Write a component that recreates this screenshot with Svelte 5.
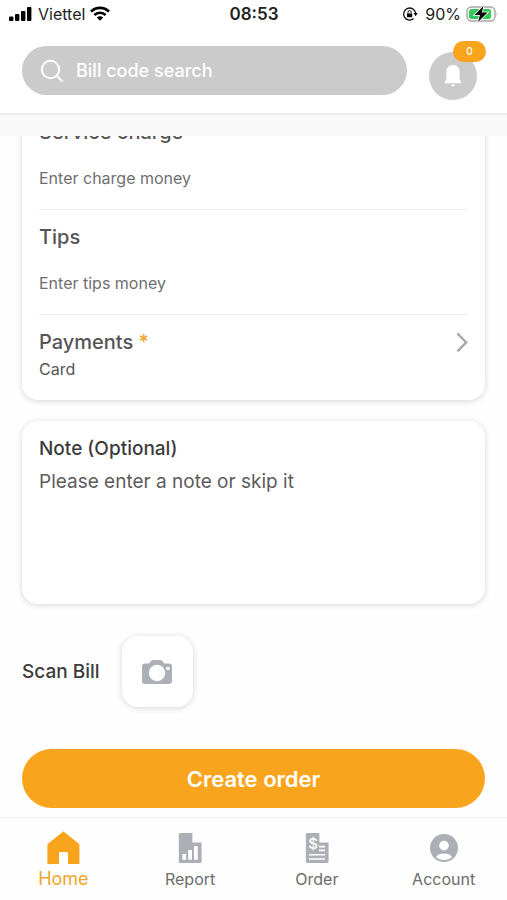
<script lang="ts">
	import { onMount } from 'svelte';

	let content: HTMLElement | null = null;

	let search = '';
	let charge = '';
	let tips = '';
	let note = '';
	let active = 'Home';

	const tabs = ['Home', 'Report', 'Order', 'Account'];

	onMount(() => {
		if (content) {
			content.scrollTop = content.scrollHeight;
		}
	});
</script>

<div class="screen">
	<div class="status">
		<div class="carrier">
			<svg width="24" height="16" viewBox="0 0 24 16">
				<rect x="0" y="10.5" width="4.4" height="4.5" rx="1" />
				<rect x="6" y="8" width="4.4" height="7" rx="1" />
				<rect x="12" y="5" width="4.4" height="10" rx="1" />
				<rect x="18" y="1" width="4.4" height="14" rx="1" />
			</svg>
			<span>Viettel</span>
			<svg width="20" height="16" viewBox="0 0 20 16">
				<g fill="none" stroke="#000" stroke-width="2.6">
					<path d="M1 5.6 C6 .6 14 .6 19 5.6" />
					<path d="M4.4 9 C7.5 6 12.5 6 15.6 9" />
				</g>
				<path d="M6.8 11.4 C8.6 9.8 11.4 9.8 13.2 11.4 L10 14.8 Z" />
			</svg>
		</div>
		<span class="clock">08:53</span>
		<div class="power">
			<svg width="16" height="16" viewBox="0 0 16 16">
				<path
					d="M11.6 12.6 A6 6 0 1 1 13.6 7"
					fill="none"
					stroke="#111"
					stroke-width="1.3"
				/>
				<path d="M11.6 7 H15.6 L13.6 10.2 Z" />
				<rect x="5" y="7.4" width="5.2" height="3.8" rx=".6" />
				<path d="M6 7.6 V6.2 A1.6 1.6 0 0 1 9.2 6.2 V7.6" fill="none" stroke="#111" />
			</svg>
			<span>90%</span>
			<svg width="33" height="18" viewBox="0 0 33 18">
				<rect x="1" y="2" width="28" height="14" rx="4.5" fill="#fff" stroke="#a5a5a5" stroke-width="1.4" />
				<rect x="3" y="4" width="22" height="10" rx="2.5" fill="#35c759" />
				<path d="M30.6 7 Q32.4 9 30.6 11 Z" fill="#a5a5a5" />
				<path
					d="M17.5 1 L8.5 10 H14 L12 17 L21.5 7.6 H15.8 Z"
					stroke="#fff"
					stroke-width="1.6"
					paint-order="stroke"
				/>
			</svg>
		</div>
	</div>

	<header>
		<label class="search">
			<svg width="24" height="24" viewBox="0 0 24 24" fill="none" stroke="#fff" stroke-width="2">
				<circle cx="10.5" cy="10.5" r="8.7" />
				<path d="M17 17 L22.5 22.5" />
			</svg>
			<input type="text" placeholder="Bill code search" aria-label="Bill code search" bind:value={search} />
		</label>
		<button class="bell" aria-label="Notifications">
			<svg width="20" height="24" viewBox="0 0 20 24" fill="#fff">
				<path
					d="M10 1 C5.6 1 3.4 4 3.4 8 V13 C3.4 15.4 2.6 16.8 1.6 18.4 V19.2 H18.4 V18.4 C17.4 16.8 16.6 15.4 16.6 13 V8 C16.6 4 14.4 1 10 1 Z"
				/>
				<path d="M7.8 20.6 H12.2 Q11.6 22.6 10 22.6 Q8.4 22.6 7.8 20.6 Z" />
			</svg>
			<span class="badge">0</span>
		</button>
	</header>

	<div class="band"></div>

	<main bind:this={content}>
		<section class="card">
			<div class="row">
				<label for="charge">Service charge</label>
				<input id="charge" type="text" placeholder="Enter charge money" bind:value={charge} />
			</div>
			<div class="row">
				<label for="tips">Tips</label>
				<input id="tips" type="text" placeholder="Enter tips money" bind:value={tips} />
			</div>
			<button class="payments">
				<span class="choice">
					<span class="title">Payments <span class="star">*</span></span>
					<span class="value">Card</span>
				</span>
				<svg width="12" height="24" viewBox="0 0 12 24" fill="none" stroke="#a9a9a9" stroke-width="2.4">
					<path d="M1.4 3.4 L10.2 12.4 L1.4 21.4" />
				</svg>
			</button>
		</section>

		<section class="card note">
			<label for="note">Note (Optional)</label>
			<textarea id="note" placeholder="Please enter a note or skip it" bind:value={note}></textarea>
		</section>

		<div class="scan">
			<span id="scan-label">Scan Bill</span>
			<button aria-labelledby="scan-label">
				<svg width="32" height="26" viewBox="0 0 32 26">
					<path
						d="M4 4.6 H8.2 L10 2 Q10.8 1 12 1 H19.4 Q20.6 1 21.4 2 L23.2 4.6 H28 Q31 4.6 31 7.6 V22 Q31 25 28 25 H4 Q1 25 1 22 V7.6 Q1 4.6 4 4.6 Z"
						fill="#acafb5"
					/>
					<circle cx="16" cy="14" r="8.2" fill="#fff" />
					<rect x="25" y="8" width="4" height="3" rx="1.4" fill="#fff" />
				</svg>
			</button>
		</div>

		<button class="create">Create order</button>
	</main>

	<nav>
		{#each tabs as tab}
			<button class:active={active === tab} on:click={() => (active = tab)}>
				<svg width="34" height="34" viewBox="0 0 34 34" fill="currentColor">
					{#if tab === 'Home'}
						<path
							d="M17.4 .6 Q18 .6 18.8 1.4 L32.6 12.4 Q33.4 13.2 33.4 14.2 V33 H22 V22.4 Q22 21 20.6 21 H14.4 Q13 21 13 22.4 V33 H1.4 V14.2 Q1.4 13.2 2.2 12.4 L16 1.4 Q16.8 .6 17.4 .6 Z"
						/>
					{:else if tab === 'Report'}
						<path
							d="M7.4 2 H19.4 V11.4 H28.6 V30.4 Q28.6 32 27 32 H7.4 Q5.8 32 5.8 30.4 V3.6 Q5.8 2 7.4 2 Z"
						/>
						<g fill="#fff">
							<rect x="9.4" y="23" width="3.8" height="5.8" rx=".6" />
							<rect x="15.2" y="19" width="3.8" height="9.8" rx=".6" />
							<rect x="21" y="15" width="3.8" height="13.8" rx=".6" />
						</g>
					{:else if tab === 'Order'}
						<path
							d="M7.4 2 H19.4 V11.4 H28.6 V30.4 Q28.6 32 27 32 H7.4 Q5.8 32 5.8 30.4 V3.6 Q5.8 2 7.4 2 Z"
						/>
						<text class="dollar" x="13" y="18" text-anchor="middle">$</text>
						<path
							d="M19 15.6 H25 M19 19.4 H25 M9 23.8 H25 M9 28 H25"
							stroke="#fff"
							stroke-width="1.6"
						/>
					{:else}
						<circle cx="17" cy="17" r="14" />
						<circle cx="17" cy="14.6" r="4.8" fill="#fff" />
						<path d="M9 26 Q11.4 22.6 17 22.6 Q22.6 22.6 25 26 Q21.8 29 17 29 Q12.2 29 9 26 Z" fill="#fff" />
					{/if}
				</svg>
				<span>{tab}</span>
			</button>
		{/each}
	</nav>
</div>

<style>
	:global(body) {
		background: #fefefe;
	}

	.screen {
		display: flex;
		flex-direction: column;
		height: 100vh;
		font-family: Inter, 'Liberation Sans', sans-serif;
		color: #555;
	}
	.screen * {
		box-sizing: border-box;
	}
	svg {
		display: block;
		flex: none;
	}
	button,
	input,
	textarea {
		margin: 0;
		padding: 0;
		border: none;
		background: none;
		font-family: inherit;
		color: inherit;
	}
	input,
	textarea {
		width: 100%;
		min-width: 0;
		outline: none;
	}
	button {
		cursor: pointer;
	}

	.status {
		display: grid;
		grid-template-columns: 1fr auto 1fr;
		align-items: center;
		height: 28px;
		padding: 0 8px 0 9px;
		background: #fff;
		color: #222;
		font-size: 16px;
	}
	.carrier,
	.power {
		display: flex;
		align-items: center;
		gap: 5px;
	}
	.power {
		justify-content: flex-end;
	}
	.power span {
		margin-left: 2px;
	}
	.clock {
		font-size: 17px;
		font-weight: 600;
	}

	header {
		display: flex;
		align-items: flex-end;
		gap: 22px;
		padding: 18px 30px 13px 22px;
		border-bottom: 2px solid #ebebeb;
		background: #fff;
	}
	.search {
		display: flex;
		flex: 1;
		align-items: center;
		gap: 12px;
		height: 49px;
		margin-bottom: 5px;
		padding: 0 18px;
		border-radius: 25px;
		background: #cbcbcb;
		color: #fff;
	}
	.search input {
		font-size: 18px;
		font-weight: 500;
	}
	.search input::placeholder {
		color: #fff;
		opacity: 1;
	}
	.bell {
		position: relative;
		display: flex;
		align-items: center;
		justify-content: center;
		width: 48px;
		height: 48px;
		border-radius: 50%;
		background: #cbcbcb;
	}
	.badge {
		position: absolute;
		top: -11px;
		right: -9px;
		width: 33px;
		border-radius: 11px;
		background: #f8a51d;
		color: #fff;
		font-size: 10px;
		font-weight: 500;
		line-height: 21px;
	}

	.band {
		flex: none;
		height: 21px;
		background: #f9f9f9;
	}

	main {
		flex: 1;
		min-height: 0;
		padding: 20px 22px 9px;
		overflow-y: auto;
		scrollbar-width: none;
	}
	.card {
		margin-bottom: 21px;
		padding: 0 17px;
		border-radius: 16px;
		background: #fff;
		box-shadow: 0 1px 6px rgba(0, 0, 0, 0.16);
	}
	.row {
		display: flex;
		flex-direction: column;
		gap: 22px;
		padding: 15px 0 19px;
		border-bottom: 1px solid #eee;
	}
	.row label,
	.title {
		font-size: 20px;
		font-weight: 500;
		line-height: 24px;
	}
	.row input {
		height: 24px;
		font-size: 16px;
	}
	.row input::placeholder {
		color: #6f6f6f;
		opacity: 1;
	}
	.payments {
		display: flex;
		align-items: flex-start;
		justify-content: space-between;
		width: 100%;
		padding: 15px 0 19px;
		text-align: left;
	}
	.choice {
		display: flex;
		flex-direction: column;
		gap: 3px;
	}
	.star {
		color: #f0a62c;
	}
	.value {
		font-size: 16px;
		line-height: 24px;
	}

	.note {
		display: flex;
		flex-direction: column;
		gap: 9px;
		padding: 16px 17px;
	}
	.note label {
		color: #3c3c3c;
		font-size: 19px;
		font-weight: 500;
		line-height: 24px;
	}
	.note textarea {
		height: 118px;
		font-size: 19px;
		line-height: 24px;
		resize: none;
	}
	.note textarea::placeholder {
		color: #5c5c5c;
		opacity: 1;
	}

	.scan {
		display: flex;
		align-items: center;
		gap: 22px;
		margin: 32px 0 42px;
		color: #3c3c3c;
		font-size: 19px;
		font-weight: 500;
	}
	.scan button {
		display: flex;
		align-items: center;
		justify-content: center;
		width: 71px;
		height: 71px;
		border-radius: 16px;
		background: #fff;
		box-shadow: 0 1px 6px rgba(0, 0, 0, 0.16);
	}

	.note {
		margin-bottom: 20px;
	}

	.create {
		display: block;
		width: 100%;
		height: 59px;
		border-radius: 30px;
		background: #f8a51d;
		color: #fff;
		font-size: 22px;
		font-weight: 600;
	}

	nav {
		display: grid;
		grid-template-columns: repeat(4, 1fr);
		padding: 13px 0 9px;
		border-top: 1px solid #f0f1f3;
	}
	nav button {
		display: flex;
		flex-direction: column;
		align-items: center;
		gap: 2px;
		color: #acafb5;
	}
	nav span {
		color: #6c6c6c;
		font-size: 16px;
		line-height: 24px;
	}
	nav .active {
		color: #f8a51d;
	}
	nav .active span {
		color: #f0a62c;
		font-size: 18px;
	}
	.dollar {
		fill: #fff;
		font-size: 15px;
		font-weight: 500;
	}
</style>
